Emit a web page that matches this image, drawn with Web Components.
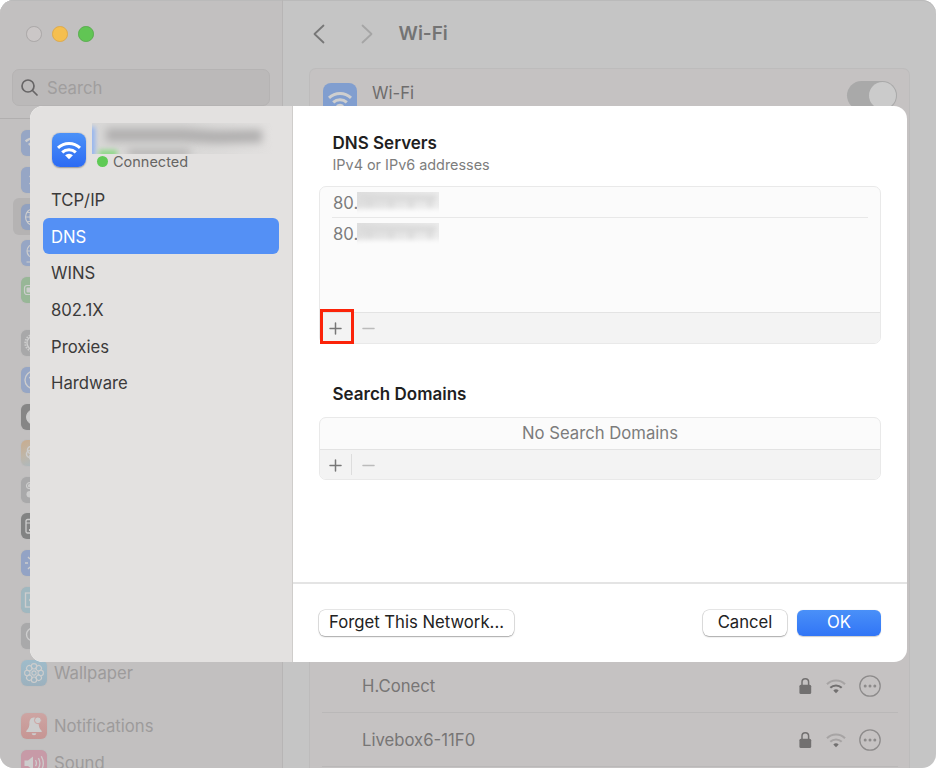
<!DOCTYPE html>
<html lang="en">
<head>
  <meta charset="UTF-8">
  <title>Wi-Fi</title>
  <style>
    html,
    body {
      margin: 0;
      width: 936px;
      height: 768px;
      overflow: hidden;
      background: #fff;
      font: 16.7px/20px Inter, "Liberation Sans", sans-serif;
    }
  </style>
</head>
<body>
<settings-window>
  <side-bar slot="sidebar">
    <side-item icon="wifi" color="#96a6c5"></side-item>
    <side-item icon="bluetooth" color="#96a6c5"></side-item>
    <side-item icon="globe" color="#91a1c0" selected></side-item>
    <side-item icon="vpn" color="#96a6c5"></side-item>
    <side-item icon="battery" color="#98b797" last></side-item>
    <side-item icon="gear" color="#a8a8a9"></side-item>
    <side-item icon="access" color="#96a6c5"></side-item>
    <side-item icon="contrast" color="#868686"></side-item>
    <side-item icon="siri" color="linear-gradient(155deg, #c9ac8e, #bfb6a8 45%, #a5bac8)"></side-item>
    <side-item icon="control" color="#a9a9aa"></side-item>
    <side-item icon="dock" color="#828383"></side-item>
    <side-item icon="sun" color="#93a3c5"></side-item>
    <side-item icon="screen" color="#a0b8c0"></side-item>
    <side-item icon="spot" color="#a9a9aa"></side-item>
    <side-item icon="flower" color="linear-gradient(#9fbccb, #9cb1be)" last>Wallpaper</side-item>
    <side-item icon="bell" color="linear-gradient(#cda5a3, #c69593)">Notifications</side-item>
    <side-item icon="sound" color="#c79aa7">Sound</side-item>
  </side-bar>
  <wifi-page>
    <network-row level="2">H.Conect</network-row>
    <network-row level="1">Livebox6-11F0</network-row>
  </wifi-page>
  <dns-sheet slot="sheet">
    <tab-item slot="tabs">TCP/IP</tab-item>
    <tab-item slot="tabs" selected>DNS</tab-item>
    <tab-item slot="tabs">WINS</tab-item>
    <tab-item slot="tabs">802.1X</tab-item>
    <tab-item slot="tabs">Proxies</tab-item>
    <tab-item slot="tabs">Hardware</tab-item>
    <edit-list marked>
      <server-row>80.</server-row>
      <server-row>80.</server-row>
    </edit-list>
    <edit-list slot="domains">
      <span>No Search Domains</span>
    </edit-list>
    <push-button slot="left">Forget This Network...</push-button>
    <push-button slot="right">Cancel</push-button>
    <push-button slot="right" primary>OK</push-button>
  </dns-sheet>
</settings-window>

<script>
  // 26x26 glyphs for the sidebar tiles
  const glyphs = {
    wifi: '<g fill="none" stroke-width="2.3"><path d="M4.6 11.4a12.4 12.4 0 0 1 16.8 0M7.8 14.8a7.6 7.6 0 0 1 10.4 0"/></g><path d="M13 20l-3-2.9a4.3 4.3 0 0 1 6 0z" stroke="none"/>',
    bluetooth: '<path d="M8.5 9l9 8-4.5 4V5l4.5 4-9 8" fill="none" stroke-width="1.4"/>',
    globe: '<g fill="none" stroke-width="1.2"><circle cx="13" cy="13" r="8.5"/><ellipse cx="13" cy="13" rx="4" ry="8.5"/><path d="M4.5 13h17M6 8.5h14M6 17.5h14"/></g>',
    vpn: '<g fill="none" stroke-width="1.2"><circle cx="13" cy="11" r="7"/><ellipse cx="13" cy="11" rx="3.2" ry="7"/><path d="M6 11h14M13 18v4M5.5 22h15"/></g>',
    battery: '<rect x="3.5" y="8.5" width="17" height="9" rx="2.5" fill="none" stroke-width="1.2"/><rect x="5.5" y="10.5" width="13" height="5" rx="1" stroke="none"/>',
    gear: '<circle cx="13" cy="13" r="8.7" fill="none" stroke-width="2" stroke-dasharray="1.5 1.2"/><circle cx="13" cy="13" r="7" fill="none" stroke-width="1.4"/><circle cx="13" cy="13" r="2" fill="none"/><path d="M13 13L9.5 7M13 13l-3.5 6M13 13h7"/>',
    access: '<g fill="none" stroke-width="1.4"><circle cx="13" cy="13" r="9"/><path d="M8 10.5l5 1 5-1M13 11.5v4l-2.5 5M13 15.5l2.5 5"/></g><circle cx="13" cy="8.3" r="1.5"/>',
    contrast: '<circle cx="13" cy="13" r="7.5"/>',
    siri: '<g fill="none" stroke-width="1.5"><circle cx="10" cy="10" r="3.5"/><circle cx="9" cy="14" r="3.5"/><circle cx="12" cy="17" r="3.5"/><circle cx="16" cy="10" r="3.5"/><circle cx="17" cy="15" r="3.5"/></g>',
    control: '<g stroke-width="1.2"><circle cx="8.5" cy="8.7" r="3" fill="none"/><circle cx="8.5" cy="8.7" r="1"/><path d="M11.5 6h6a2.7 2.7 0 0 1 0 5.4h-6" fill="none"/></g><rect x="5.5" y="14" width="15" height="6.5" rx="3.2" stroke="none"/>',
    dock: '<rect x="5" y="6.5" width="16" height="13.5" rx="1.5" fill="none" stroke-width="1.3"/><path d="M5 10h16" fill="none"/><path d="M8 17h2.5M12 17h2.5" stroke-width="2"/>',
    sun: '<circle cx="13" cy="13" r="3.5"/><path d="M4 13h3M19 13h3M13 4v3M13 19v3M7 7l2 2M17 17l2 2M7 19l2-2M17 9l2-2" stroke-width="1.4"/>',
    screen: '<rect x="4.5" y="6" width="17" height="14" fill="none" stroke-width="1.3"/><circle cx="10" cy="13" r="1.5"/>',
    spot: '<circle cx="12" cy="11.5" r="6.5" fill="none" stroke-width="1.4"/><path d="M17 16.5l4 4"/>',
    bell: '<path d="M13 4.5c-3.7 0-4.6 3-4.6 6 0 4-1.4 5.5-3.1 7.5v1h15.4v-1c-1.7-2-3-3.5-3.1-7.5 0-3-.9-6-4.6-6z" stroke="none"/><path d="M10.7 20.3a2.3 2 0 0 0 4.6 0z" stroke="none"/><circle cx="16.9" cy="7.3" r="3.4" stroke="#cca19f" stroke-width="1"/>',
    sound: '<path d="M3.5 10.5h3.5l5-4v13.500l-5-4h-3.500z" stroke="none"/><path d="M14.5 10.2q1.8 3 0 6M17.4 8.2q3 5 0 10M20.3 6.3q4 7 0 14" fill="none" stroke-width="1.3"/>'
  };
  glyphs.flower = [0, 45, 90, 135, 180, 225, 270, 315].map(a =>
    `<circle cx="13" cy="6.3" r="2.7" fill="none" stroke-width="1.1" transform="rotate(${a} 13 13)"/>`).join('') +
    '<circle cx="13" cy="13" r="2.1" fill="none" stroke-width="1.1"/>';

  // builds a custom element around a fixed piece of markup
  function define(name, render) {
    customElements.define(name, class extends HTMLElement {
      constructor() {
        super();
        this.attachShadow({mode: 'open'});
      }

      connectedCallback() {
        this.shadowRoot.innerHTML = render(this);
      }
    });
  }

  define('settings-window', () => `
    <style>
      :host {
        display: flex;
        position: relative;
        width: 936px;
        height: 768px;
        border-radius: 14px;
        overflow: hidden;
        background: #c5c5c5;
        box-shadow: inset 0 1px #bababa;
      }
      ::slotted([slot=sheet]) { position: absolute; left: 30px; top: 106px; }
    </style>
    <slot name="sidebar"></slot>
    <slot></slot>
    <slot name="sheet"></slot>`);

  define('side-bar', () => `
    <style>
      :host {
        display: flex;
        flex-direction: column;
        box-sizing: border-box;
        flex: 0 0 283px;
        background: #c2c0c0;
        border-right: 1px solid #b7b5b5;
        box-shadow: inset 0 1px #bababa;
      }
      .lights { display: flex; flex: none; gap: 10.5px; padding: 26px 0 0 26px; }
      i { box-sizing: border-box; width: 15.6px; height: 15.6px; border-radius: 50%; border: 1px solid #aaa7a7; background: #cbc7c7; }
      .min { background: #f5bf4f; border-color: #deaa4a; }
      .max { background: #61c554; border-color: #58ad4d; }
      .search {
        display: flex;
        flex: none;
        align-items: center;
        gap: 9px;
        box-sizing: border-box;
        width: 258px;
        height: 37px;
        margin: 27.4px 0 12px 12px;
        padding: 1px 0 0 8px;
        border: 1px solid #b5b3b3;
        border-radius: 7px;
        background: #bbb9b9;
        color: #a09e9e;
      }
      .items { flex: none; border-top: 1px solid #b1afaf; padding: 6.2px 13px 0; }
    </style>
    <div class="lights"><i></i><i class="min"></i><i class="max"></i></div>
    <div class="search">
      <svg width="17" height="17" fill="none" stroke="#676566" stroke-width="1.7" stroke-linecap="round"><circle cx="7" cy="7" r="6"/><path d="M11.5 11.5l4.5 4.5"/></svg>
      Search
    </div>
    <div class="items"><slot></slot></div>`);

  define('side-item', el => `
    <style>
      :host {
        display: flex;
        align-items: center;
        gap: 7px;
        box-sizing: border-box;
        height: 36.6px;
        padding-left: 8px;
        border-radius: 6px;
        color: #9d9b9b;
      }
      :host([selected]) { background: #b5b3b3; }
      :host([last]) { margin-bottom: 17px; }
      svg { border-radius: 6px; background: ${el.getAttribute('color')}; box-shadow: 0 0 1px #9997; }
    </style>
    <svg width="26" height="26" fill="#cdcdcd" stroke="#cdcdcd">${glyphs[el.getAttribute('icon')]}</svg>
    <slot></slot>`);

  define('wifi-page', () => `
    <style>
      :host { flex: 1; display: flex; flex-direction: column; padding: 0 26px 0 26px; }
      header { display: flex; flex: none; align-items: center; height: 68px; color: #747474; font-size: 19px; font-weight: 600; }
      header svg { margin: 0 34px 0 4px; }
      header svg + svg { margin: 0 25.5px 0 2px; }
      .card { flex: 1; display: flex; flex-direction: column; box-sizing: border-box; border: 1px solid #bdbcbc; border-bottom: 0; border-radius: 7px 7px 0 0; background: #c5c2c2; }
      .power { display: flex; flex: none; align-items: flex-start; box-sizing: border-box; height: 590px; padding: 14px 12px 0 13px; color: #6e6c6c; }
      .tile { border-radius: 8px; background: #819ecf; }
      .name { flex: 1; padding-left: 15px; }
      .toggle { box-sizing: border-box; width: 50px; height: 29px; border-radius: 15px; margin-top: -2px; padding: 1px 1px 1px 22px; background: #a9a9a9; }
      .toggle i { display: block; width: 27px; height: 27px; border-radius: 50%; background: #cbcbcb; }
    </style>
    <header>
      <svg width="12" height="20" fill="none" stroke="#777" stroke-width="1.8" stroke-linecap="round" stroke-linejoin="round"><path d="M10.5 1.5l-9 8.5 9 8.5"/></svg>
      <svg width="12" height="20" fill="none" stroke="#a5a5a5" stroke-width="1.8" stroke-linecap="round" stroke-linejoin="round"><path d="M1.5 1.5l9 8.5-9 8.5"/></svg>
      Wi-Fi
    </header>
    <div class="card">
      <div class="power">
        <svg class="tile" width="34" height="34" viewBox="0 0 26 26" fill="#cfcfcf" stroke="#cfcfcf">${glyphs.wifi}</svg>
        <span class="name">Wi-Fi</span>
        <span class="toggle"><i></i></span>
      </div>
      <slot></slot>
    </div>`);

  define('network-row', el => `
    <style>
      :host { display: flex; align-items: center; flex: 0 0 53px; margin: 0 11px 0 12px; padding: 0 17px 0 40px; border-bottom: 1px solid #bab8b8; color: #777575; }
      .name { flex: 1; padding-top: 1px; }
      svg { margin-right: 14px; }
      svg.more { margin-right: 0; margin-left: -1px; }
    </style>
    <span class="name"><slot></slot></span>
    <svg width="13" height="18"><path d="M3 8V5a3.3 3.3 0 0 1 6.6 0v3" fill="none" stroke="#727070" stroke-width="1.5"/><rect x=".4" y="7.8" width="11.8" height="9.2" rx="1.5" fill="#727070"/></svg>
    <svg width="20" height="16" fill="none" stroke-width="2.1">
      <path d="M1 6.2a12.8 12.8 0 0 1 18 0" stroke="#a7a4a4"/>
      <path d="M4.3 9.8a8.2 8.2 0 0 1 11.4 0" stroke="${el.getAttribute('level') > 1 ? '#727070' : '#a7a4a4'}"/>
      <path d="M10 15.3l-2.7-2.7a3.8 3.8 0 0 1 5.4 0z" fill="#727070"/>
    </svg>
    <svg class="more" width="22" height="22" fill="#8d8b8b"><circle cx="11" cy="11" r="10.2" fill="none" stroke="#8d8b8b" stroke-width="1.3"/><circle cx="6.2" cy="11" r="1.5"/><circle cx="11" cy="11" r="1.5"/><circle cx="15.8" cy="11" r="1.5"/></svg>`);

  define('dns-sheet', () => `
    <style>
      :host { display: flex; width: 877px; height: 556px; border-radius: 13px; overflow: hidden; background: #fff; }
      aside { box-sizing: border-box; flex: 0 0 263px; padding: 27px 13px 0; border-right: 1px solid #cfcdcb; background: #e3e1e0; }
      .network { display: flex; height: 48.3px; padding-left: 9px; }
      .tile { flex: none; border-radius: 8px; background: linear-gradient(#4b91f8, #2c6bf4); box-shadow: 0 .5px 1.5px #0005; }
      .info { margin: -10px 0 0 6px; }
      .hidden { width: 182px; height: 31px; overflow: hidden; }
      .hidden svg { display: block; }
      .state { display: flex; align-items: center; gap: 5px; height: 15px; padding-left: 5px; font-size: 14.5px; line-height: 15px; color: #666564; }
      .state i { width: 11px; height: 11px; border-radius: 50%; background: #5fca55; }
      main { flex: 1; display: flex; flex-direction: column; }
      .body { box-sizing: border-box; height: 478px; padding: 27px 26px 0; border-bottom: 2px solid #e4e4e4; }
      h2 { margin: 0 0 0 13.5px; font-size: 17px; line-height: 20px; font-weight: 600; color: #1f1f1f; }
      p { margin: 2px 0 12px 13.5px; font-size: 14.4px; line-height: 19px; color: #7d7d7d; }
      .domains { margin: 40px 0 13px 13.5px; }
      footer { display: flex; gap: 10px; padding: 26px 26px 0; }
      .gap { flex: 1; }
    </style>
    <aside>
      <div class="network">
        <svg class="tile" width="34" height="34" viewBox="0 0 26 26" fill="#fff" stroke="#fff">${glyphs.wifi}</svg>
        <div class="info">
          <div class="hidden">
            <svg width="182" height="31">
              <defs>
                <filter id="b" filterUnits="userSpaceOnUse" x="-20" y="-20" width="220" height="70"><feGaussianBlur stdDeviation="4"/></filter>
                <filter id="s" filterUnits="userSpaceOnUse" x="-20" y="-20" width="220" height="70"><feGaussianBlur stdDeviation="2.5"/></filter>
                <linearGradient id="f"><stop offset=".5" stop-color="#d8d7d6"/><stop offset="1" stop-color="#e3e1e0"/></linearGradient>
              </defs>
              <rect width="182" height="31" fill="url(#f)"/>
              <path d="M14 12h78l32 2 46-1" stroke="#b0afaf" stroke-width="13" fill="none" filter="url(#b)"/>
              <path d="M36 30h62" stroke="#aaa9a9" stroke-width="6" filter="url(#b)"/>
              <rect x="-4" y="4" width="7" height="31" fill="#8fb2f2" filter="url(#s)"/>
              <rect x="7" y="27" width="18" height="8" fill="#8ed887" filter="url(#s)"/>
            </svg>
          </div>
          <div class="state"><i></i>Connected</div>
        </div>
      </div>
      <slot name="tabs"></slot>
    </aside>
    <main>
      <div class="body">
        <h2>DNS Servers</h2>
        <p>IPv4 or IPv6 addresses</p>
        <slot></slot>
        <h2 class="domains">Search Domains</h2>
        <slot name="domains"></slot>
      </div>
      <footer><slot name="left"></slot><span class="gap"></span><slot name="right"></slot></footer>
    </main>`);

  define('tab-item', () => `
    <style>
      :host { display: flex; align-items: center; box-sizing: border-box; height: 36.6px; padding: 1.2px 0 0 8px; border-radius: 6px; color: #3b3a3a; }
      :host([selected]) { background: #5490f5; color: #fff; }
    </style>
    <slot></slot>`);

  define('edit-list', () => `
    <style>
      :host { display: flex; flex-direction: column; box-sizing: border-box; height: 63px; border: 1px solid #e9e9e9; border-radius: 7px; background: #fbfbfb; color: #7c7c7c; }
      :host([marked]) { height: 158px; }
      .rows { flex: 1; display: flex; flex-direction: column; align-items: center; padding: 0 12px; }
      ::slotted(span) { line-height: 31px; }
      .bar { display: flex; align-items: center; box-sizing: border-box; height: 31px; border-top: 1px solid #e3e3e3; border-radius: 0 0 6px 6px; background: #f3f3f3; }
      .add { display: flex; box-sizing: border-box; width: 32px; height: 21px; padding-left: 9px; align-items: center; border-right: 1px solid #ddd; }
      .remove { padding-left: 10px; }
      svg { display: block; margin-top: 2px; fill: none; stroke: #777; stroke-width: 1.5; stroke-linecap: round; }
      .remove svg { stroke: #bbb; }
      /* call-out around the add button */
      :host([marked]) .add { flex: none; width: 34px; height: 35px; padding: 2px 0 0 6px; margin-top: -3px; border: 3px solid #fb2309; }
      :host([marked]) .remove { padding-left: 8px; }
      :host([marked]) .remove svg { margin-top: 1px; }
    </style>
    <div class="rows"><slot></slot></div>
    <div class="bar">
      <span class="add"><svg width="13" height="13"><path d="M1 6.5h11M6.5 1v11"/></svg></span>
      <span class="remove"><svg width="13" height="13"><path d="M1 6.5h11"/></svg></span>
    </div>`);

  define('server-row', () => `
    <style>
      :host { display: flex; align-items: center; align-self: stretch; box-sizing: border-box; height: 31px; padding: 1px 0 0 1px; }
      :host(:first-child) { padding-top: 2px; border-bottom: 1px solid #e8e8e8; }
      .mask { width: 82px; height: 22px; margin-left: -1px; overflow: hidden; background: linear-gradient(100deg, #dedede, #e4e4e4 40%, #ececec); }
      .mask svg { display: block; }
    </style>
    <slot></slot>
    <span class="mask">
      <svg width="82" height="22">
        <filter id="m" filterUnits="userSpaceOnUse" x="-10" y="-10" width="102" height="42"><feGaussianBlur stdDeviation="2.8"/></filter>
        <g fill="none" filter="url(#m)">
          <path d="M-4 22h92" stroke="#fcfcfc" stroke-width="10"/>
          <path d="M3 6h76" stroke="#dadada" stroke-width="6"/>
          <path d="M12 6v10M34 6v11M54 6v11M73 6v10" stroke="#d9d9d9" stroke-width="4"/>
        </g>
      </svg>
    </span>`);

  define('push-button', () => `
    <style>
      :host { display: flex; justify-content: center; box-sizing: border-box; height: 26px; width: 195px; border-radius: 6px; line-height: 25px; background: #fff; color: #222; box-shadow: 0 0 0 .5px #0003, 0 1px 1.5px #0004; }
      :host([slot=right]) { width: 84px; }
      :host([primary]) { background: linear-gradient(#4a90f8, #3175f6); color: #fff; box-shadow: 0 .5px 1px #0003; }
    </style>
    <slot></slot>`);
</script>
</body>
</html>
